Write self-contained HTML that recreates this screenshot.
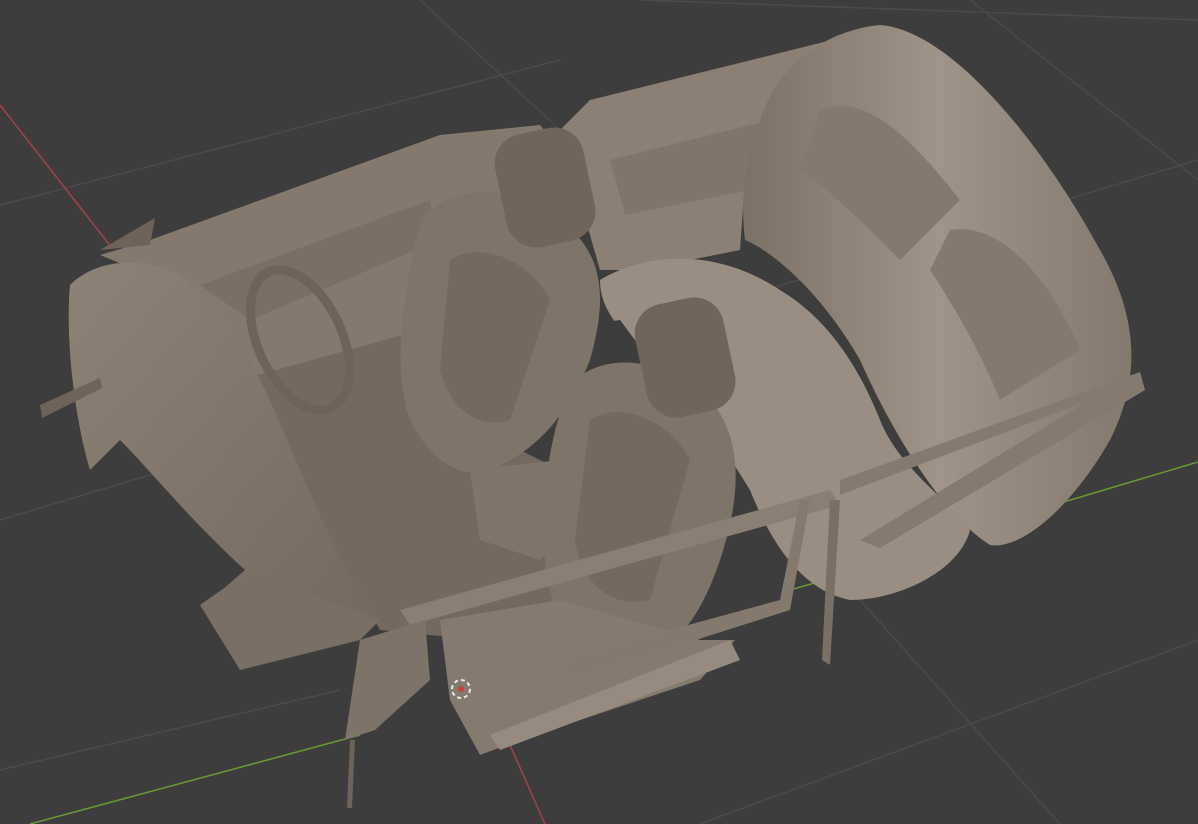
<!DOCTYPE html>
<html><head><meta charset="utf-8"><style>
html,body{margin:0;padding:0;background:#3d3d3d;width:1198px;height:824px;overflow:hidden}
svg{display:block}
</style></head><body>
<svg width="1198" height="824" viewBox="0 0 1198 824" xmlns="http://www.w3.org/2000/svg">
<defs>
<linearGradient id="g1" x1="0" y1="0" x2="1" y2="1"><stop offset="0" stop-color="#8e8276"/><stop offset="1" stop-color="#74695f"/></linearGradient>
<linearGradient id="g2" x1="0" y1="0" x2="1" y2="0"><stop offset="0" stop-color="#7c7166"/><stop offset="0.5" stop-color="#a09387"/><stop offset="1" stop-color="#85796d"/></linearGradient>
</defs>
<rect width="1198" height="824" fill="#3d3d3d"/>
<g stroke="#4a4a4a" stroke-width="1.5" fill="none">
<line x1="0" y1="205" x2="560" y2="60"/><line x1="0" y1="520" x2="1198" y2="160"/>
<line x1="420" y1="0" x2="560" y2="130"/><line x1="640" y1="0" x2="1198" y2="20"/>
<line x1="860" y1="600" x2="1060" y2="824"/><line x1="970" y1="0" x2="1198" y2="180"/>
<line x1="700" y1="824" x2="1198" y2="640"/><line x1="0" y1="770" x2="340" y2="690"/>
</g>
<line x1="0" y1="105" x2="112" y2="248" stroke="#a8404c" stroke-width="1.5"/>
<line x1="510" y1="745" x2="545" y2="824" stroke="#a8404c" stroke-width="1.5"/>
<line x1="30" y1="824" x2="360" y2="735" stroke="#6a9a34" stroke-width="1.5"/>
<line x1="1030" y1="512" x2="1198" y2="462" stroke="#6a9a34" stroke-width="1.5"/>
<line x1="790" y1="590" x2="860" y2="570" stroke="#6a9a34" stroke-width="1.5"/>
<polygon points="560,130 590,100 840,38 860,60 770,120 745,180 740,250 640,270 600,270 580,200" fill="#8c8074"/>
<polygon points="610,160 770,120 750,190 625,215" fill="#807569"/>
<path d="M760,120 C780,60 830,30 880,25 C950,30 1040,140 1100,250 C1140,320 1140,380 1110,440 C1070,510 1020,550 990,545 C950,520 900,450 860,360 C820,290 770,250 745,240 C740,200 745,160 760,120Z" fill="url(#g2)"/>
<path d="M820,110 C870,90 920,150 960,200 L900,260 C860,220 830,190 800,170Z" fill="#85796d"/>
<path d="M950,230 C1010,220 1060,300 1080,350 L1000,400 C980,350 950,300 930,270Z" fill="#85796d"/>
<path d="M600,280 C650,250 720,250 780,290 C830,320 860,370 880,420 C900,470 950,500 970,530 C960,570 900,600 850,600 C800,590 770,540 750,490 C720,440 700,420 650,360 C620,330 600,310 600,280Z" fill="#9a8e82"/>
<polygon points="100,255 150,240 440,135 540,125 560,150 580,250 560,270 420,330 300,370 250,380 190,330 160,280" fill="#85796d"/>
<polygon points="200,285 430,200 440,240 250,320" fill="#7a6f64"/>
<polygon points="240,380 420,330 460,420 560,470 590,520 560,600 480,640 380,630 340,560 290,470" fill="#75695f"/>
<polygon points="470,470 560,460 600,500 540,560 480,540" fill="#807569"/>
<!-- hole between seats -->
<polygon points="560,330 620,320 650,360 600,380 565,370" fill="#3d3d3d"/>
<path d="M70,285 C95,260 140,255 180,275 C240,320 270,400 300,470 C330,540 350,580 380,620 C340,630 300,620 240,600 L205,605 L245,570 C190,520 150,470 120,440 L90,470 C75,420 65,340 70,285Z" fill="url(#g1)"/>
<polygon points="200,605 250,570 380,620 360,640 240,670" fill="#7a6f64"/>
<ellipse cx="300" cy="340" rx="42" ry="75" transform="rotate(-25 300 340)" fill="none" stroke="#6d6359" stroke-width="9"/>
<path d="M430,210 C470,180 520,190 560,220 C600,250 610,290 590,360 C570,410 540,450 490,470 C460,480 430,460 410,420 C395,380 400,320 410,270 C415,240 420,220 430,210Z" fill="#7f7468"/>
<path d="M450,260 C480,240 530,260 550,300 L510,420 C480,430 450,410 440,370Z" fill="#74695f"/>
<rect x="500" y="130" width="90" height="115" rx="30" transform="rotate(-12 545 187)" fill="#6f655b"/>
<path d="M575,380 C610,350 670,360 710,400 C745,440 740,500 720,560 C700,620 670,660 620,665 C580,665 550,620 545,560 C540,500 550,420 575,380Z" fill="#7f7468"/>
<path d="M590,420 C620,400 670,420 690,460 L650,600 C610,610 580,580 575,540Z" fill="#74695f"/>
<rect x="640" y="300" width="90" height="115" rx="30" transform="rotate(-12 685 357)" fill="#6f655b"/>
<polygon points="440,620 560,600 700,640 735,640 700,680 520,740 480,755 450,700" fill="#857a6e"/>
<polygon points="490,735 730,640 740,660 500,750" fill="#978b7f"/>
<polygon points="400,610 830,490 840,505 410,625" fill="#8b7f73"/>
<polygon points="840,480 1140,372 1145,390 880,548 860,540 1090,400 840,495" fill="#86796d"/>
<polygon points="560,660 780,600 800,500 810,500 790,610 570,680" fill="#85796d"/>
<polygon points="830,500 840,500 830,665 822,660" fill="#7a6f64"/>
<polygon points="360,640 425,620 430,680 375,730 345,740" fill="#7e7368"/>
<polygon points="350,740 355,740 352,808 347,808" fill="#6d6359"/>
<polygon points="40,405 100,378 102,388 42,418" fill="#6d6359"/>
<polygon points="100,250 155,218 150,245" fill="#6d6359"/>
<circle cx="461" cy="689" r="9" fill="none" stroke="#e8e8e8" stroke-width="2" stroke-dasharray="4 3"/>
<circle cx="461" cy="689" r="3" fill="#c84030"/>
</svg>
</body></html>
